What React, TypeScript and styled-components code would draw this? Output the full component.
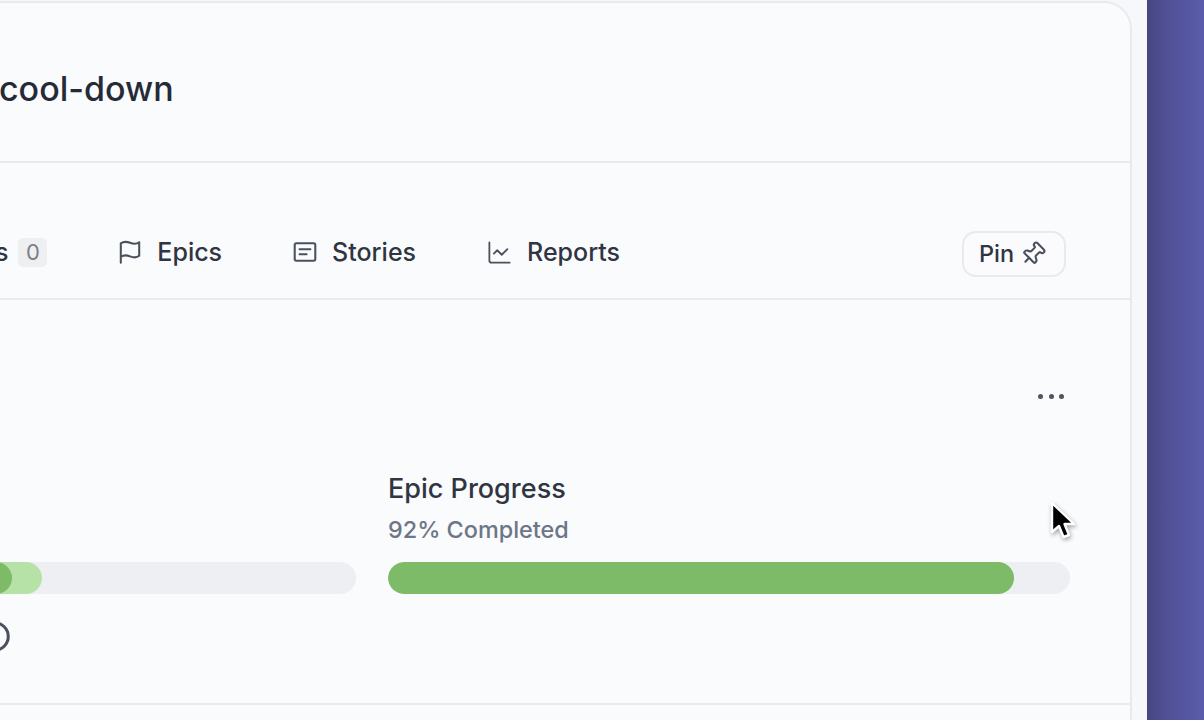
import React from "react";
import styled, { createGlobalStyle } from "styled-components";
import { ChartLine, Pin, CircleHelp } from "lucide-react";

const GlobalStyle = createGlobalStyle`
  html, body {
    margin: 0;
    padding: 0;
    height: 100%;
    overflow: hidden;
    background: #f7f8fb;
    font-family: Inter, "Liberation Sans", sans-serif;
    -webkit-font-smoothing: antialiased;
  }
`;

const Page = styled.div`
  position: relative;
  display: flex;
  width: 1204px;
  height: 720px;
  overflow: hidden;
`;

const Stage = styled.main`
  flex: 1;
  min-width: 0;
  padding: 1px 16px 0 0;
  background: #f6f8fb;
`;

const Card = styled.section`
  box-sizing: border-box;
  width: 1532px;
  height: 760px;
  margin-left: -400px;
  background: #fafbfd;
  border: 2px solid #e9eaee;
  border-radius: 28px;
`;

const Header = styled.header`
  box-sizing: border-box;
  display: flex;
  align-items: center;
  height: 160px;
  padding: 12px 0 0 397px;
  border-bottom: 2px solid #e9eaee;
`;

const Title = styled.h1`
  margin: 0;
  font-size: 34px;
  font-weight: 500;
  color: #252a36;
`;

const TabBar = styled.nav`
  box-sizing: border-box;
  display: flex;
  align-items: center;
  height: 137px;
  padding: 43px 64px 0 0;
  border-bottom: 2px solid #e9eaee;
`;

const Tabs = styled.div`
  display: flex;
  flex: 1;
  justify-content: flex-end;
  align-items: center;
  gap: 70px;
  margin-right: 342px;
`;

const Tab = styled.a`
  display: flex;
  align-items: center;
  gap: 14px;
  font-size: 25px;
  font-weight: 450;
  color: #2f3542;
  white-space: nowrap;
  svg { color: #4a505c; flex: none; }
`;

const Count = styled.span`
  display: inline-flex;
  align-items: center;
  justify-content: center;
  width: 29px;
  height: 29px;
  margin-left: -4px;
  border-radius: 5px;
  background: #eeeff1;
  font-size: 22px;
  font-weight: 400;
  color: #7a7f88;
`;

const PinButton = styled.button`
  display: flex;
  align-items: center;
  gap: 6px;
  box-sizing: border-box;
  width: 104px;
  height: 46px;
  margin-top: 3px;
  padding: 0 0 0 15px;
  border: 2px solid #e9eaee;
  border-radius: 14px;
  background: #fbfbfd;
  font-family: inherit;
  font-size: 23.5px;
  font-weight: 450;
  color: #2f3542;
  svg { color: #4a505c; flex: none; transform: rotate(45deg); }
`;

const Body = styled.div`
  box-sizing: border-box;
  height: 405px;
  padding: 0 60px 0 72px;
  border-bottom: 2px solid #e9eaee;
`;

const MoreRow = styled.div`
  display: flex;
  justify-content: flex-end;
  gap: 5.3px;
  height: 173px;
  padding: 94px 6px 0 0;
  box-sizing: border-box;
`;

const Dot = styled.span`
  width: 5px;
  height: 5px;
  border-radius: 50%;
  background: #4f5560;
`;

const Columns = styled.div`
  display: grid;
  grid-template-columns: 1fr 1fr;
  gap: 32px;
`;

const Column = styled.div`
  display: flex;
  flex-direction: column;
`;

const Label = styled.div`
  height: 39px;
  font-size: 27px;
  font-weight: 450;
  line-height: 32px;
  color: #2f3542;
`;

const SubLabel = styled.div`
  height: 50px;
  font-size: 23.4px;
  font-weight: 450;
  line-height: 36px;
  color: #6d7686;
`;

const Track = styled.div`
  position: relative;
  height: 32px;
  border-radius: 16px;
  background: #eeeff2;
  overflow: hidden;
`;

const Fill = styled.div<{ $tone: "solid" | "light" }>`
  position: absolute;
  top: 0;
  bottom: 0;
  left: 0;
  border-radius: 16px;
  background: ${(p) => (p.$tone === "solid" ? "#7dbb68" : "#b7e2a7")};
`;

const Spacer = styled.div`
  height: 89px;
`;

const StatusIcon = styled.div`
  margin: 26px 0 0 304px;
  height: 33px;
  color: #4a505c;
`;

const Backdrop = styled.aside`
  flex: none;
  width: 57px;
  background: linear-gradient(90deg, #47477f 0%, #4f4f95 30%, #5a5cab 100%);
`;

const Cursor = styled.svg`
  position: absolute;
  left: 1049px;
  top: 501px;
  filter: drop-shadow(1px 2px 2px rgba(0, 0, 0, 0.35));
`;

const FlagIcon = () => (
  <svg width="26" height="26" viewBox="0 0 24 24" fill="none" stroke="currentColor" strokeWidth="1.9" strokeLinecap="round" strokeLinejoin="round">
    <path d="M3.5 22V4c3-2 6-1.5 8.5-.5s6 1.5 8.5-.5v12.5c-2.5 2-6 1.5-8.5.5s-5.5-1.5-8.5.5" />
  </svg>
);

const StoriesIcon = () => (
  <svg width="26" height="26" viewBox="0 0 24 24" fill="none" stroke="currentColor" strokeWidth="1.9" strokeLinecap="round" strokeLinejoin="round">
    <rect x="2.5" y="4" width="19" height="16" rx="1.5" />
    <path d="M7 9.5h10M7 14h6.5" />
  </svg>
);

export default function App() {
  return (
    <Page>
      <GlobalStyle />
      <Stage>
        <Card>
          <Header>
            <Title>cool-down</Title>
          </Header>
          <TabBar>
            <Tabs>
              <Tab>
                Issues
                <Count>0</Count>
              </Tab>
              <Tab>
                <FlagIcon />
                Epics
              </Tab>
              <Tab>
                <StoriesIcon />
                Stories
              </Tab>
              <Tab>
                <ChartLine size={27} strokeWidth={1.6} />
                Reports
              </Tab>
            </Tabs>
            <PinButton>
              Pin
              <Pin size={26} strokeWidth={1.9} />
            </PinButton>
          </TabBar>
          <Body>
            <MoreRow>
              <Dot />
              <Dot />
              <Dot />
            </MoreRow>
            <Columns>
              <Column>
                <Spacer />
                <Track>
                  <Fill $tone="light" style={{ width: "53.96%" }} />
                  <Fill $tone="solid" style={{ width: "49.56%" }} />
                </Track>
                <StatusIcon>
                  <CircleHelp size={33} strokeWidth={2.2} />
                </StatusIcon>
              </Column>
              <Column>
                <Label>Epic Progress</Label>
                <SubLabel>92% Completed</SubLabel>
                <Track>
                  <Fill $tone="solid" style={{ width: "91.8%" }} />
                </Track>
              </Column>
            </Columns>
          </Body>
        </Card>
      </Stage>
      <Backdrop />
      <Cursor width="28" height="42" viewBox="0 0 28 42">
        <path d="M3 2v29l7-6 4.5 11 5.5-2-4.5-11H25z" fill="#000" stroke="#fff" strokeWidth="2.4" strokeLinejoin="round" />
      </Cursor>
    </Page>
  );
}
